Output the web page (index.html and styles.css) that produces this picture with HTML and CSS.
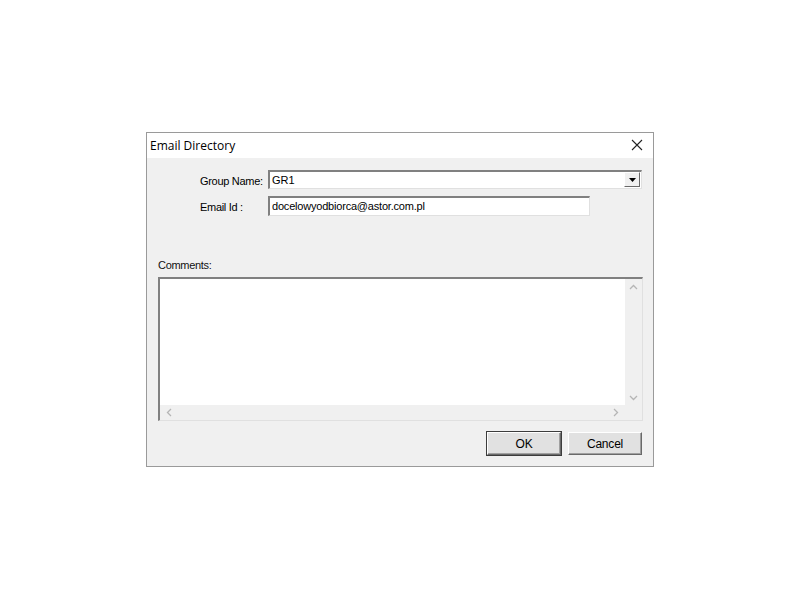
FILE: index.html
```html
<!DOCTYPE html>
<html lang="en">
<head>
    <meta charset="UTF-8">
    <meta name="viewport" content="width=device-width, initial-scale=1.0">
    <title>Email Directory</title>
    <link rel="stylesheet" href="styles.css">
</head>
<body>
    <div class="dialog">
        <div class="title-bar">
            <span class="title">Email Directory</span>
            <span class="close">
                <svg width="12" height="12" viewBox="0 0 12 12">
                    <path d="M1 1 L11 11 M11 1 L1 11" stroke="#222" stroke-width="1.1" fill="none"/>
                </svg>
            </span>
        </div>
        <div class="dialog-body">
            <div class="fields">
                <div class="field-row">
                    <label class="field-label">Group Name:</label>
                    <div class="combo">
                        <span class="combo-text">GR1</span>
                        <span class="combo-button">
                            <svg width="7" height="4" viewBox="0 0 7 4"><path d="M0 0 H7 L3.5 4 Z" fill="#000"/></svg>
                        </span>
                    </div>
                </div>
                <div class="field-row">
                    <label class="field-label">Email Id :</label>
                    <div class="text-input">docelowyodbiorca@astor.com.pl</div>
                </div>
            </div>

            <div class="comments-label">Comments:</div>
            <div class="memo">
                <div class="memo-area">
                    <div class="memo-text"></div>
                    <div class="vscroll">
                        <svg width="9" height="6" viewBox="0 0 9 6"><path d="M1 5 L4.5 1.5 L8 5" stroke="#b5b5b5" stroke-width="1.3" fill="none"/></svg>
                        <svg width="9" height="6" viewBox="0 0 9 6"><path d="M1 1 L4.5 4.5 L8 1" stroke="#b5b5b5" stroke-width="1.3" fill="none"/></svg>
                    </div>
                </div>
                <div class="hscroll">
                    <svg width="6" height="9" viewBox="0 0 6 9"><path d="M5 1 L1.5 4.5 L5 8" stroke="#b5b5b5" stroke-width="1.3" fill="none"/></svg>
                    <svg width="6" height="9" viewBox="0 0 6 9"><path d="M1 1 L4.5 4.5 L1 8" stroke="#b5b5b5" stroke-width="1.3" fill="none"/></svg>
                </div>
            </div>

            <div class="buttons">
                <button class="btn default">OK</button>
                <button class="btn">Cancel</button>
            </div>
        </div>
    </div>
</body>
</html>
```

FILE: styles.css
```css
body {
    margin: 0;
    padding: 132px 0 0 146px;
    background-color: #fff;
    font-family: "Liberation Sans", Arial, sans-serif;
    font-size: 11px;
    color: #000;
}
.dialog {
    width: 506px;
    height: 333px;
    border: 1px solid #9a9a9a;
    background-color: #f0f0f0;
    display: flex;
    flex-direction: column;
}
.title-bar {
    height: 25px;
    background-color: #fff;
    display: flex;
    align-items: center;
    justify-content: space-between;
    padding: 0 10px 0 3px;
}
.title {
    font-family: "Open Sans", "Liberation Sans", sans-serif;
    font-size: 12px;
    color: #000;
    margin-top: -1px;
}
.close {
    display: flex;
    margin-top: -1px;
}
.dialog-body {
    flex: 1;
    padding: 12px 11px 0 11px;
    display: flex;
    flex-direction: column;
}
.fields {
    display: flex;
    flex-direction: column;
    gap: 7px;
    padding-left: 42px;
}
.field-row {
    display: flex;
    align-items: center;
    gap: 6px;
}
.field-label {
    width: 62px;
    white-space: nowrap;
    font-size: 11px;
    letter-spacing: -0.3px;
    padding-top: 2px;
}
.combo {
    width: 371px;
    height: 16px;
    background: #fff;
    border-top: 2px solid #808080;
    border-left: 2px solid #808080;
    border-right: 1px solid #e0e0e0;
    border-bottom: 1px solid #e0e0e0;
    display: flex;
    align-items: stretch;
    justify-content: space-between;
}
.combo-text {
    padding-left: 2px;
    font-size: 11px;
    line-height: 16px;
}
.combo-button {
    width: 14px;
    background: #f0f0f0;
    border-left: 1px solid #fff;
    border-top: 1px solid #fff;
    border-right: 1px solid #696969;
    border-bottom: 1px solid #696969;
    display: flex;
    align-items: center;
    justify-content: center;
    margin: 0 1px 1px 0;
}
.text-input {
    width: 317px;
    height: 17px;
    background: #fff;
    border-top: 2px solid #808080;
    border-left: 2px solid #808080;
    border-right: 1px solid #e0e0e0;
    border-bottom: 1px solid #e0e0e0;
    padding-left: 2px;
    font-size: 11px;
    letter-spacing: -0.2px;
    line-height: 17px;
}
.comments-label {
    margin-top: 43px;
    height: 13px;
    font-size: 11px;
    letter-spacing: -0.3px;
    color: #111;
}
.memo {
    margin-top: 5px;
    width: 482px;
    height: 141px;
    background: #fff;
    border-top: 2px solid #808080;
    border-left: 2px solid #808080;
    border-right: 1px solid #e0e0e0;
    border-bottom: 1px solid #e0e0e0;
    display: flex;
    flex-direction: column;
}
.memo-area {
    flex: 1;
    display: flex;
}
.memo-text {
    flex: 1;
}
.vscroll {
    width: 17px;
    background: #f0f0f0;
    display: flex;
    flex-direction: column;
    justify-content: space-between;
    align-items: center;
    padding: 5px 0 4px;
}
.hscroll {
    height: 15px;
    background: #f0f0f0;
    display: flex;
    align-items: center;
    justify-content: space-between;
    padding: 0 23px 0 6px;
}
.buttons {
    margin-top: 11px;
    display: flex;
    justify-content: flex-end;
    gap: 7px;
}
.btn {
    width: 74px;
    height: 23px;
    background: #e1e1e1;
    border-top: 1px solid #fff;
    border-left: 1px solid #fff;
    border-right: 1px solid #696969;
    border-bottom: 1px solid #696969;
    box-shadow: inset -1px -1px 0 #a0a0a0;
    font-family: "Liberation Sans", Arial, sans-serif;
    font-size: 12px;
    letter-spacing: -0.2px;
    color: #000;
    padding: 0;
}
.btn.default {
    outline: 1px solid #3c3c3c;
    outline-offset: 0;
}
```
